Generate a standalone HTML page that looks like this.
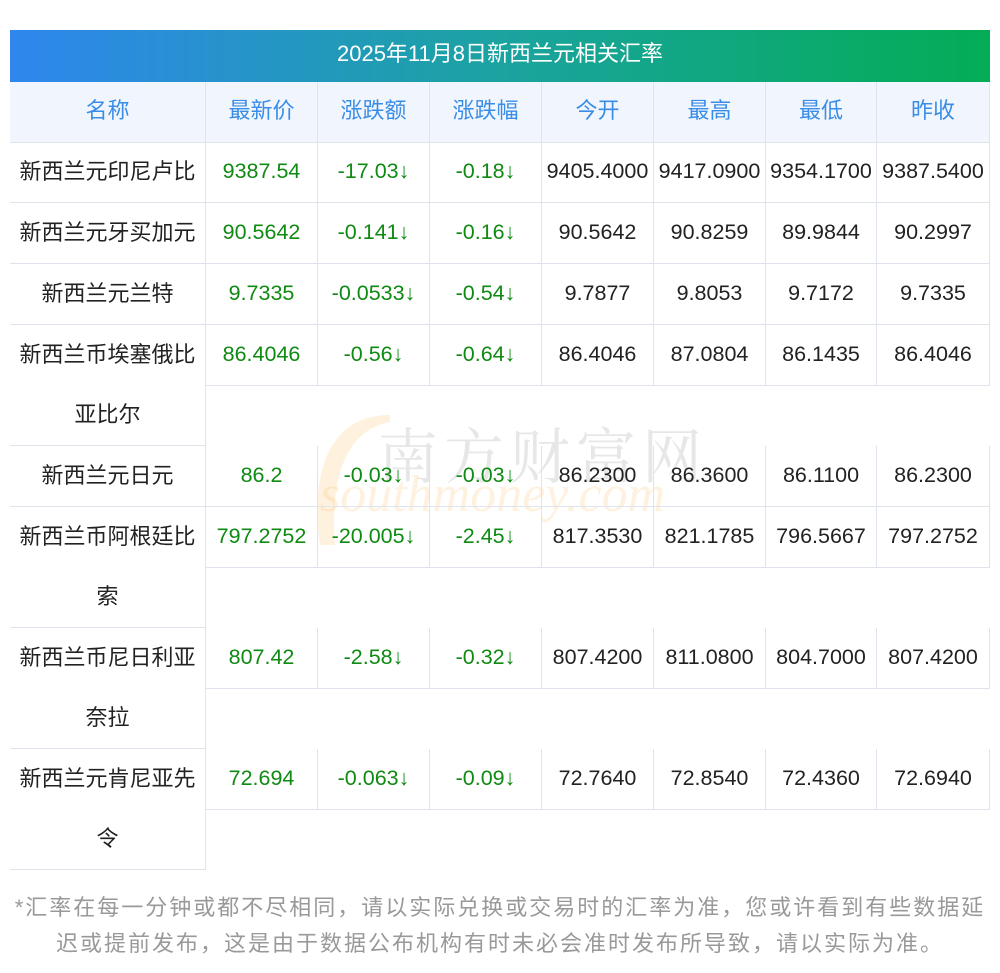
<!DOCTYPE html>
<html><head><meta charset="utf-8"><style>
*{margin:0;padding:0;box-sizing:border-box}
body{width:1000px;height:973px;background:#fff;position:relative;font-family:"Liberation Sans","Noto Sans CJK SC",sans-serif;overflow:hidden}
.t{position:absolute;left:10px;top:30px;width:980px;height:52px;background:linear-gradient(90deg,#2f86ee,#1ba3a0 50%,#03ad55);color:#fff;font-size:22px;text-align:center;line-height:48px}
.c{position:absolute;height:61px;line-height:58px;text-align:center;font-size:21.5px;border-right:1px solid #dfe3ec;border-bottom:1px solid #dfe3ec;white-space:nowrap;color:#222}
.h{background:#f1f6fe;color:#3a8de6;top:82px;font-size:22px}
.g{color:#0f8a12}
.n{line-height:60px;font-size:22px}
.wm{position:absolute;color:rgba(120,120,120,.18);font-family:"Liberation Serif","Noto Serif CJK SC",serif;white-space:nowrap}
.foot{position:absolute;left:0;top:890px;width:1000px;text-align:center;font-size:22px;line-height:36px;color:#999;white-space:nowrap;letter-spacing:2px}
</style></head><body>
<div class="t">2025年11月8日新西兰元相关汇率</div>
<svg style="position:absolute;left:290px;top:410px" width="120" height="140"><path d="M100 5 C40 5 20 60 30 135 L45 135 C40 70 55 20 100 12 Z" fill="rgba(250,200,120,.25)"/></svg>
<div class="wm" style="left:378px;top:410px;font-size:60px;letter-spacing:6px">南方财富网</div>
<div class="wm" style="left:320px;top:465px;font-size:52px;font-style:italic;color:rgba(250,190,110,.22)">southmoney.com</div>
<div id="g"></div>
<div class="foot">*汇率在每一分钟或都不尽相同，请以实际兑换或交易时的汇率为准，您或许看到有些数据延<br>迟或提前发布，这是由于数据公布机构有时未必会准时发布所导致，请以实际为准。</div>
<script>
var X=[10,206,318,430,542,654,766,877,990];
var H=["名称","最新价","涨跌额","涨跌幅","今开","最高","最低","昨收"];
var h="";
for(var i=0;i<8;i++)h+='<div class="c h" style="left:'+X[i]+'px;width:'+(X[i+1]-X[i])+'px;height:61px">'+H[i]+'</div>';
var R=[
["新西兰元印尼卢比",142,61,"9387.54","-17.03↓","-0.18↓","9405.4000","9417.0900","9354.1700","9387.5400"],
["新西兰元牙买加元",203,61,"90.5642","-0.141↓","-0.16↓","90.5642","90.8259","89.9844","90.2997"],
["新西兰元兰特",264,61,"9.7335","-0.0533↓","-0.54↓","9.7877","9.8053","9.7172","9.7335"],
["新西兰币埃塞俄比<br>亚比尔",325,121,"86.4046","-0.56↓","-0.64↓","86.4046","87.0804","86.1435","86.4046"],
["新西兰元日元",446,61,"86.2","-0.03↓","-0.03↓","86.2300","86.3600","86.1100","86.2300"],
["新西兰币阿根廷比<br>索",507,121,"797.2752","-20.005↓","-2.45↓","817.3530","821.1785","796.5667","797.2752"],
["新西兰币尼日利亚<br>奈拉",628,121,"807.42","-2.58↓","-0.32↓","807.4200","811.0800","804.7000","807.4200"],
["新西兰元肯尼亚先<br>令",749,121,"72.694","-0.063↓","-0.09↓","72.7640","72.8540","72.4360","72.6940"]];
R.forEach(function(r){
 h+='<div class="c n" style="left:10px;width:196px;top:'+r[1]+'px;height:'+r[2]+'px">'+r[0]+'</div>';
 for(var i=1;i<8;i++){
  h+='<div class="c'+(i<4?' g':'')+'" style="left:'+X[i]+'px;width:'+(X[i+1]-X[i])+'px;top:'+r[1]+'px">'+r[i+2]+'</div>';
 }
});
document.getElementById("g").innerHTML=h;
</script>
</body></html>
